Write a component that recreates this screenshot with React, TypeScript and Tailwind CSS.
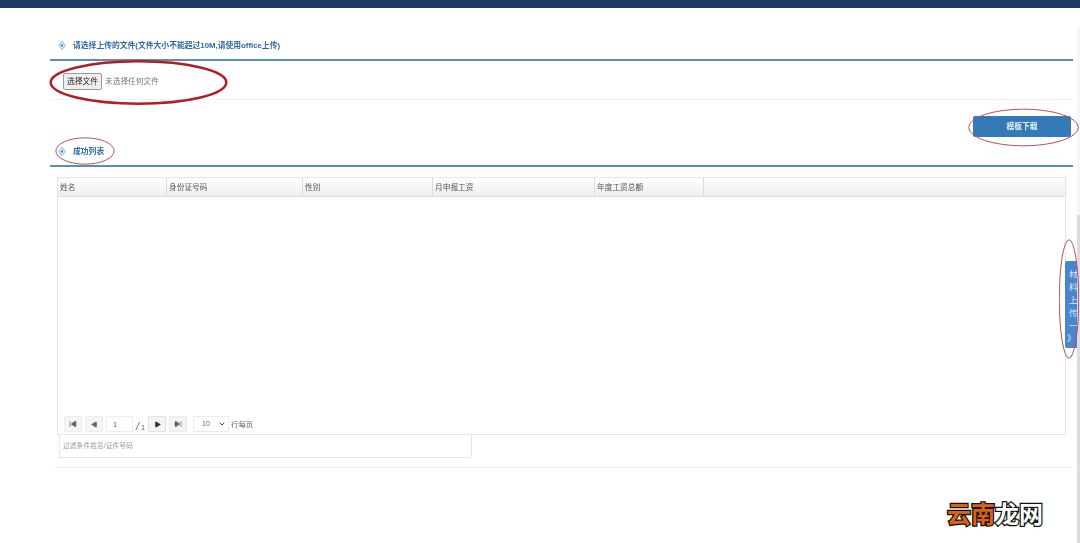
import { ChevronDown, SkipBack, SkipForward, Play } from 'lucide-react';

const font = '[font-family:"Liberation_Sans","Noto_Sans_CJK_SC",sans-serif]';

const Diamond = () => (
  <svg width="8" height="9" viewBox="0 0 8 9" className="shrink-0">
    <path d="M4 .7 L7.2 4.5 L4 8.3 L.8 4.5 Z" fill="none" stroke="#9cc0e0" strokeWidth="1.1" />
    <path d="M4 2.8 L5.4 4.5 L4 6.2 L2.6 4.5 Z" fill="#3f78b3" />
  </svg>
);

const SectionTitle = ({ title }: { title: string }) => (
  <div className="h-[30px] flex items-start pl-[8px] pt-[8px] gap-[7px] border-b-2 border-[#5b8db8]">
    <div className="mt-[2px]">
      <Diamond />
    </div>
    <span className="text-[7.8px] leading-[14px] font-bold text-[#2f68a0]">{title}</span>
  </div>
);

const PagerBtn = ({ children, active }: { children: React.ReactNode; active?: boolean }) => (
  <div
    className={`w-[18px] h-[16px] flex items-center justify-center border rounded-[1px] ${
      active ? 'border-[#dde2e7] bg-[#f3f5f7] text-[#333]' : 'border-[#ececec] bg-[#f5f5f5] text-[#666]'
    }`}
  >
    {children}
  </div>
);

const columns = [
  { name: '姓名', width: 'w-[109px]' },
  { name: '身份证号码', width: 'w-[136px]' },
  { name: '性别', width: 'w-[130px]' },
  { name: '月申报工资', width: 'w-[162px]' },
  { name: '年度工资总额', width: 'w-[109px]' },
];

const Ellipse = ({ className, thick }: { className: string; thick?: boolean }) => (
  <svg className={`absolute pointer-events-none ${className}`} viewBox="0 0 100 100" preserveAspectRatio="none">
    <ellipse
      cx="50"
      cy="50"
      rx="48.5"
      ry="47"
      fill="none"
      stroke={thick ? '#b01e24' : '#b5525c'}
      strokeWidth={thick ? 2.5 : 1}
      vectorEffect="non-scaling-stroke"
    />
  </svg>
);

export default function App() {
  return (
    <div className={`${font} relative w-[1080px] h-[543px] overflow-hidden bg-white`}>
      <div className="h-[8px] bg-[#1c3a66]" />

      <div className="pl-[50px] pr-[7px] pt-[23px] blur-[0.3px]">
        <SectionTitle title="请选择上传的文件(文件大小不能超过10M,请使用office上传)" />

        <div className="h-[39px] flex items-start pt-[12px] pl-[13px] border-b border-[#f3f3f3]">
          <div className="w-[39px] h-[17px] flex items-center justify-center bg-[#efefef] border border-[#999] rounded-[2px] text-[7.8px] text-[#222]">
            选择文件
          </div>
          <span className="ml-[3px] text-[7.7px] leading-[17px] text-[#777]">未选择任何文件</span>
        </div>

        <div className="flex justify-end pt-[16px] pr-[2px]">
          <button className="w-[98px] h-[21px] bg-[#337ab7] rounded-[2px] text-[7.8px] font-bold text-[#e8f1f8]">
            模板下载
          </button>
        </div>

        <SectionTitle title="成功列表" />

        <div className="ml-[7px] mr-[7px] mt-[10px] h-[258px] flex flex-col border border-[#e6e6e6]">
          <div className="h-[19px] flex shrink-0 bg-gradient-to-b from-white to-[#eeeeee] border-b border-[#e2e2e2]">
            {columns.map(col => (
              <div
                key={col.name}
                className={`${col.width} pl-[2px] border-r border-[#dddddd] text-[7.7px] leading-[19px] text-[#555]`}
              >
                {col.name}
              </div>
            ))}
          </div>

          <div className="flex-1" />

          <div className="h-[18px] flex items-start pl-[6px] gap-[3px] text-[7.4px] text-[#666]">
            <PagerBtn>
              <SkipBack size={8} fill="currentColor" />
            </PagerBtn>
            <PagerBtn>
              <Play size={7} fill="currentColor" className="rotate-180" />
            </PagerBtn>
            <div className="w-[27px] h-[16px] pl-[6px] leading-[16px] border border-[#ececec]">1</div>
            <span className="leading-[20px] w-[9px] whitespace-nowrap">
              <span className="text-[11px] italic">/</span> 1
            </span>
            <PagerBtn active>
              <Play size={7} fill="currentColor" />
            </PagerBtn>
            <PagerBtn>
              <SkipForward size={8} fill="currentColor" />
            </PagerBtn>
            <div className="ml-[3px] w-[36px] h-[16px] flex items-center justify-between pl-[8px] pr-[2px] border border-[#ececec] text-[7px]">
              10
              <ChevronDown size={8} strokeWidth={3} className="text-[#444]" />
            </div>
            <span className="leading-[18px] -ml-[1px]">行每页</span>
          </div>
        </div>

        <div className="ml-[9px] w-[413px] h-[23px] pl-[3px] border border-t-0 border-[#e6e6e6] text-[6.8px] leading-[22px] text-[#999]">
          过滤条件姓名/证件号码
        </div>

        <div className="ml-[5px] mt-[9px] border-t border-[#f3f3f3]" />
      </div>

      {/* side tab, sits over the page edge */}
      <div className="absolute left-[1065px] top-[261px] w-[12px] h-[87px] pt-[9px] bg-[#4a86cf] rounded-l-[2px] overflow-hidden flex flex-col items-start pl-[4px] gap-[4px] text-[8.5px] leading-[9px] text-[#dce9f7]">
        <span>材</span>
        <span>料</span>
        <span>上</span>
        <span>传</span>
        <span>一</span>
        <span className="-mt-[1px] -ml-[2px]">》</span>
      </div>
      {/* page scrollbar */}
      <div className="absolute left-[1077px] top-[27px] w-[3px] h-[188px] bg-[#f6f6f6]" />
      <div className="absolute left-[1077px] top-[215px] w-[3px] h-[328px] bg-[#dcdcdc]" />

      {/* hand drawn red marks on top of the screenshot */}
      <Ellipse thick className="left-[48px] top-[60px] w-[181px] h-[45px]" />
      <Ellipse className="left-[55px] top-[137px] w-[60px] h-[28px]" />
      <Ellipse className="left-[967px] top-[108px] w-[113px] h-[39px]" />
      <Ellipse className="left-[1059px] top-[236px] w-[20px] h-[126px]" />

      <div className="absolute left-[947px] top-[497px] text-[24px] leading-[36px] font-bold [-webkit-text-stroke:2.5px_#111] [paint-order:stroke_fill]">
        <span className="text-[#d9620f]">云南</span>
        <span className="text-white">龙网</span>
      </div>
    </div>
  );
}
